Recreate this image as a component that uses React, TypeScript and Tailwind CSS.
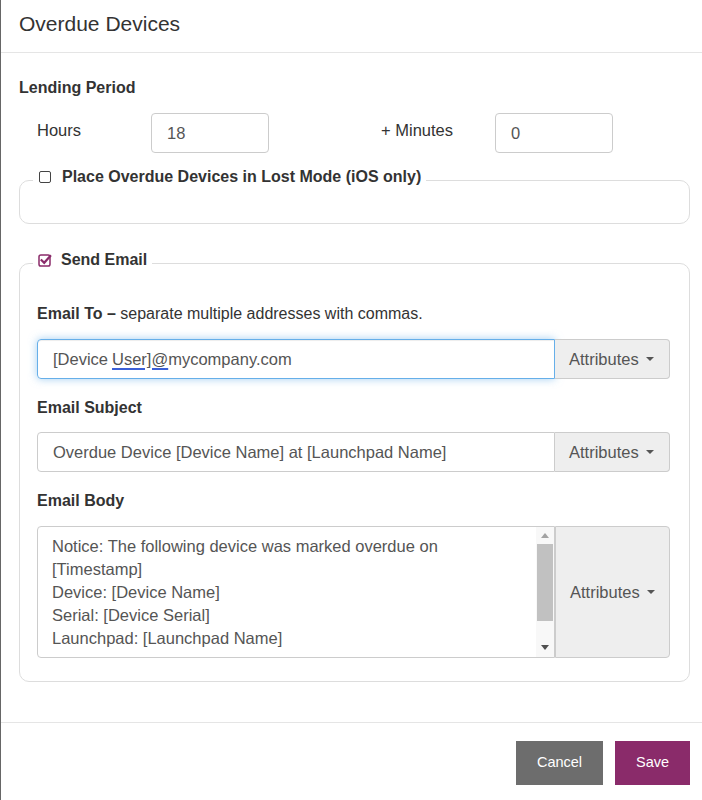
import React from "react";

const font = { fontFamily: '"Liberation Sans", Arial, sans-serif' };

function Caret() {
  return (
    <span className="ml-[7px] inline-block h-0 w-0 border-x-[4px] border-t-[4px] border-x-transparent border-t-[#555] align-middle" />
  );
}

function Addon({ className = "" }: { className?: string }) {
  return (
    <div
      className={
        "flex w-[115px] shrink-0 items-center rounded-r-[4px] border border-[#ccc] bg-[#eee] pl-[14px] text-[16.5px] text-[#555] " +
        className
      }
    >
      Attributes
      <Caret />
    </div>
  );
}

function Unchecked() {
  return <span className="inline-block h-[12px] w-[12px] rounded-[2px] border-[1.5px] border-[#444]" />;
}

function Checked() {
  return (
    <svg width="14" height="14" viewBox="0 0 14 14" className="block">
      <rect x="1" y="2" width="11" height="11" rx="1.8" fill="none" stroke="#8a2b6a" strokeWidth="1.5" />
      <path d="M3.6 7.2 L6.2 9.8 L12.2 3" fill="none" stroke="#8a2b6a" strokeWidth="2.2" strokeLinecap="square" />
    </svg>
  );
}

export default function App() {
  return (
    <div
      style={font}
      className="h-[800px] w-[702px] overflow-hidden border-l border-[#666] bg-white text-[#333]"
    >
      {/* Header */}
      <div className="h-[53px] border-b border-[#e5e5e5] pl-[18px] pt-[12px]">
        <div className="text-[21px] leading-[24px] text-[#333]">Overdue Devices</div>
      </div>

      {/* Body */}
      <div className="px-[18px]">
        <div className="mt-[24px] text-[16px] font-bold leading-[22px]">Lending Period</div>

        <div className="mt-[14px] flex h-[40px] items-start">
          <div className="w-[132px] pl-[18px] pt-[6px] text-[16.5px] leading-[22px]">Hours</div>
          <div className="flex h-[40px] w-[118px] items-center rounded-[4px] border border-[#ccc] pl-[15px] text-[16.5px] text-[#555]">
            18
          </div>
          <div className="w-[226px] pl-[112px] pt-[6px] text-[16.5px] leading-[22px]">+ Minutes</div>
          <div className="flex h-[40px] w-[118px] items-center rounded-[4px] border border-[#ccc] pl-[15px] text-[16.5px] text-[#555]">
            0
          </div>
        </div>

        {/* Fieldset 1 */}
        <fieldset className="mt-[13px] w-[671px] rounded-[10px] border border-[#ddd]">
          <legend className="ml-[13px] px-[5px] pb-[6px]">
            <div className="flex items-center text-[16px] font-bold leading-[22px]">
              <span className="ml-[1px] mr-[11px] flex items-center">
                <Unchecked />
              </span>
              Place Overdue Devices in Lost Mode (iOS only)
            </div>
          </legend>
          <div className="h-[29px]" />
        </fieldset>

        {/* Fieldset 2 */}
        <fieldset className="mt-[25px] w-[671px] rounded-[10px] border border-[#ddd]">
          <legend className="ml-[13px] px-[5px] pb-[6px]">
            <div className="flex items-center text-[16px] font-bold leading-[22px]">
              <span className="mr-[9px] flex items-center">
                <Checked />
              </span>
              Send Email
            </div>
          </legend>

          <div className="pb-[23px] pl-[17px] pr-[19px]">
            <div className="mt-[26px] text-[16px] leading-[22px]">
              <span className="font-bold">Email To –</span> separate multiple addresses with commas.
            </div>

            <div className="mt-[14px] flex h-[40px]">
              <div className="flex flex-1 items-center rounded-l-[4px] border border-[#66afe9] pl-[15px] text-[16.5px] text-[#555] shadow-[inset_0_1px_1px_rgba(0,0,0,0.075),0_0_8px_rgba(102,175,233,0.6)]">
                [Device{" "}
                <span className="ml-[4px] underline decoration-[#3b5fd6] decoration-[1.5px] underline-offset-[3px]">
                  User]@
                </span>
                mycompany.com
              </div>
              <Addon className="border-l-0" />
            </div>

            <div className="mt-[18px] text-[16px] font-bold leading-[22px]">Email Subject</div>

            <div className="mt-[13px] flex h-[40px]">
              <div className="flex flex-1 items-center rounded-l-[4px] border border-[#ccc] pl-[15px] text-[16.5px] text-[#555]">
                Overdue Device [Device Name] at [Launchpad Name]
              </div>
              <Addon className="border-l-0" />
            </div>

            <div className="mt-[18px] text-[16px] font-bold leading-[22px]">Email Body</div>

            <div className="mt-[14px] flex h-[132px]">
              <div className="flex flex-1 rounded-l-[4px] border border-[#ccc]">
                <div className="flex-1 pl-[14px] pt-[8px] text-[16.5px] leading-[23px] text-[#555]">
                  <div>Notice: The following device was marked overdue on</div>
                  <div>[Timestamp]</div>
                  <div>Device: [Device Name]</div>
                  <div>Serial: [Device Serial]</div>
                  <div>Launchpad: [Launchpad Name]</div>
                </div>
                <div className="flex w-[18px] flex-col items-center bg-[#f8f8f8] py-[4px]">
                  <span className="mt-[2px] h-0 w-0 border-x-[4px] border-b-[5px] border-x-transparent border-b-[#a3a3a3]" />
                  <div className="mt-[6px] h-[77px] w-[16px] bg-[#c1c1c1]" />
                  <div className="flex-1" />
                  <span className="mb-[3px] h-0 w-0 border-x-[4px] border-t-[5px] border-x-transparent border-t-[#505050]" />
                </div>
              </div>
              <Addon />
            </div>
          </div>
        </fieldset>
      </div>

      {/* Footer */}
      <div className="mt-[40px] flex justify-end gap-[12px] border-t border-[#e5e5e5] pr-[12px] pt-[18px]">
        <button className="h-[44px] w-[87px] bg-[#6d6d6d] text-[14.5px] text-white">Cancel</button>
        <button className="h-[44px] w-[75px] bg-[#8a2b6a] text-[14.5px] text-white">Save</button>
      </div>
    </div>
  );
}
